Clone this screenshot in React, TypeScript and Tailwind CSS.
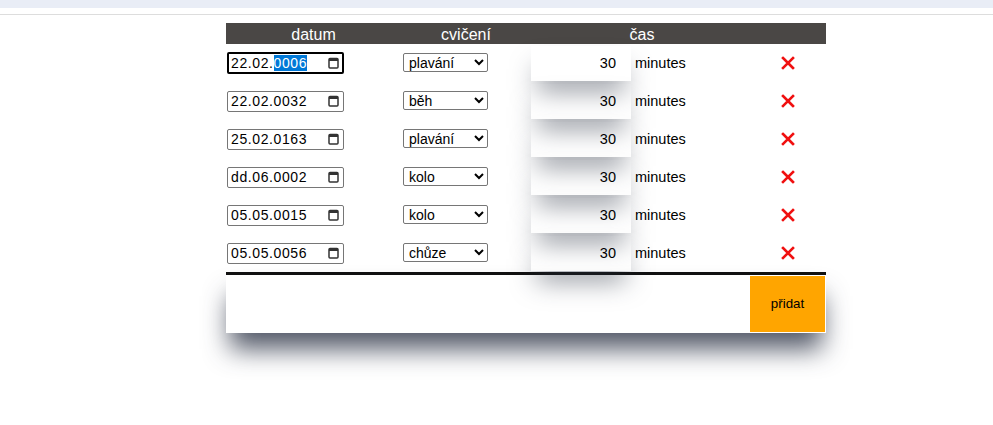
import { ReactNode } from "react"

const ROWS = [
  { date: ["22", "02", "0006"], sport: "plavání", focused: true },
  { date: ["22", "02", "0032"], sport: "běh" },
  { date: ["25", "02", "0163"], sport: "plavání" },
  { date: ["dd", "06", "0002"], sport: "kolo" },
  { date: ["05", "05", "0015"], sport: "kolo" },
  { date: ["05", "05", "0056"], sport: "chůze" },
]

const SPORTS = ["plavání", "běh", "kolo", "chůze"]

const GRID = "grid grid-cols-[175px_130px_222px_73px]"

function CalendarIcon() {
  return (
    <svg width="11" height="12" viewBox="0 0 11 12" aria-hidden>
      <rect x="1" y="1.5" width="9" height="9.5" rx="1" fill="none" stroke="#333" strokeWidth="1.5" />
      <rect x="1" y="1.5" width="9" height="2.5" fill="#333" />
    </svg>
  )
}

function DateField({ parts, focused }: { parts: string[]; focused?: boolean }) {
  const [d, m, y] = parts
  let year: ReactNode = y
  if (focused) year = <span className="bg-[#0078d7] text-white">{y}</span>
  return (
    <div
      className={
        "flex w-[117px] items-center justify-between rounded-[2px] bg-white text-[14px] text-black " +
        (focused ? "h-[22px] border-2 border-black pl-[2px] pr-[3px]" : "h-[21px] border border-[#767676] pl-[3px] pr-[4px]")
      }
    >
      <span className="leading-[18px] tracking-[0.6px]">
        {d}.{m}.{year}
      </span>
      <CalendarIcon />
    </div>
  )
}

function RemoveIcon() {
  return (
    <svg width="14" height="14" viewBox="0 0 14 14" aria-hidden>
      <path d="M2 2 L12 12 M12 2 L2 12" stroke="#f01010" strokeWidth="2.6" strokeLinecap="square" />
    </svg>
  )
}

export default function App() {
  return (
    <div className="min-h-[425px] bg-white font-['Liberation_Sans',Arial,sans-serif]">
      <div className="h-2 bg-[#e9edf6]" />
      <div className="mt-[6px] h-px bg-[#dddddd]" />

      <div className="ml-[226px] mt-2 w-[600px]">
        {/* header */}
        <div className={GRID + " h-[21px] items-center bg-[#4a4745] text-[16px] text-white"}>
          <div className="text-center">datum</div>
          <div className="text-center">cvičení</div>
          <div className="text-center">čas</div>
          <div />
        </div>

        {/* rows */}
        {ROWS.map((row, i) => (
          <div key={i} className={GRID + " h-[38px] items-center"}>
            <div className="pl-[1px]">
              <DateField parts={row.date} focused={row.focused} />
            </div>
            <div className="pl-[2px]">
              <select
                defaultValue={row.sport}
                className="h-[19px] w-[85px] rounded-[2px] border border-[#767676] bg-white pl-[1px] text-[14px] text-black"
              >
                {SPORTS.map((s) => (
                  <option key={s}>{s}</option>
                ))}
              </select>
            </div>
            <div className="flex items-center">
              <input
                readOnly
                value="30"
                className="relative z-10 h-[35px] w-[100px] bg-transparent pr-[15px] text-right text-[14.5px] text-black shadow-[0_16px_26px_-6px_rgba(40,48,64,0.5)] outline-none"
              />
              <span className="ml-[4px] pt-px text-[14.5px] text-black">minutes</span>
            </div>
            <div className="flex justify-center pr-[3px]">
              <RemoveIcon />
            </div>
          </div>
        ))}

        {/* footer */}
        <div className="flex h-[61px] justify-end border-t-[3px] border-[#111111] bg-white pt-px pr-px shadow-[0_20px_26px_-4px_rgba(40,48,66,0.8)]">
          <button className="h-[56px] w-[75px] bg-[#ffa500] text-[13.33px] text-black">přidat</button>
        </div>
      </div>
    </div>
  )
}
